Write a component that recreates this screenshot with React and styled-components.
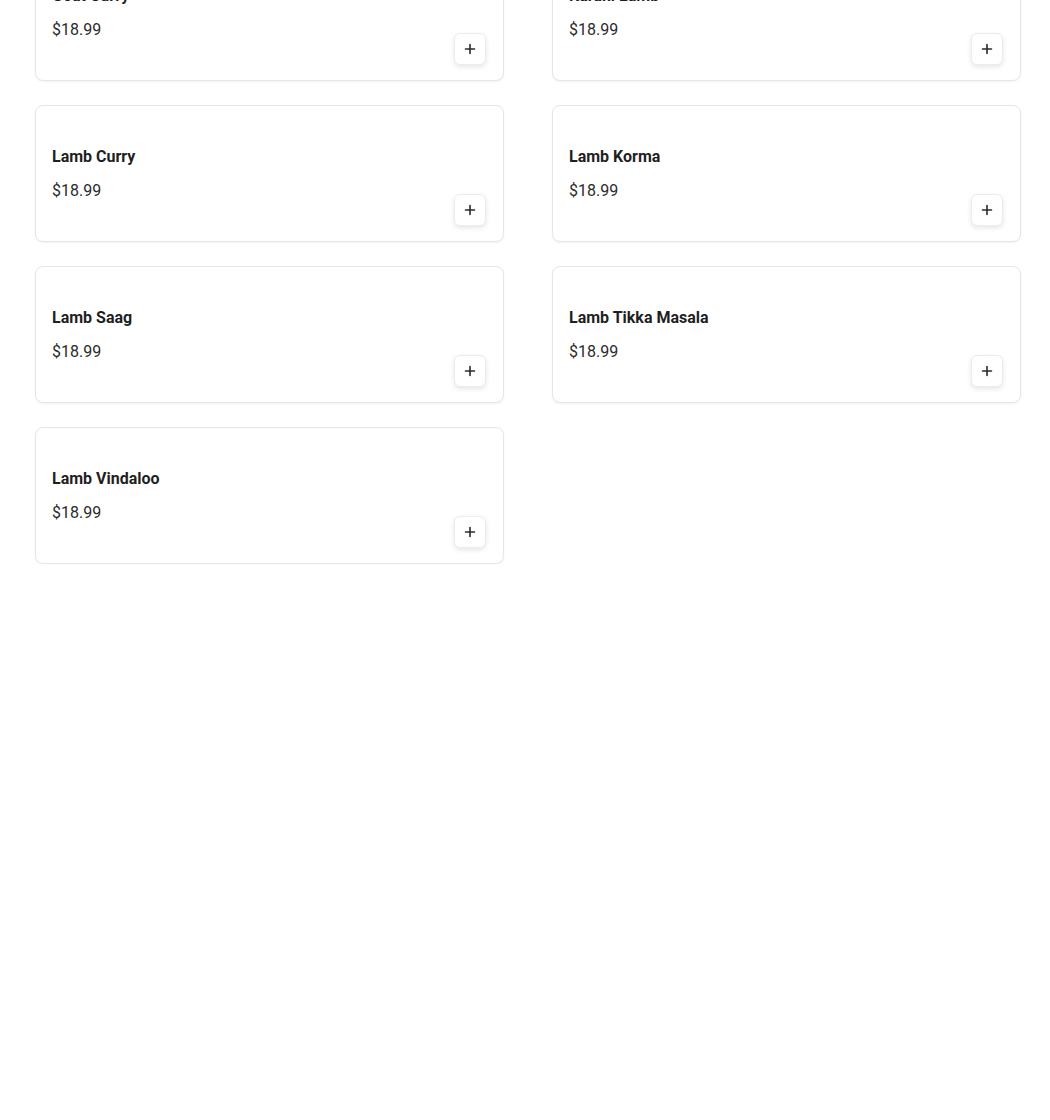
import React from 'react';
import styled, { createGlobalStyle } from 'styled-components';

const GlobalStyle = createGlobalStyle`
  body {
    margin: 0;
    background: #ffffff;
    font-family: Roboto, "Liberation Sans", sans-serif;
  }
`;

const Page = styled.div`
  padding: 0 29px 0 35px;
  margin-top: -56px;
`;

const Grid = styled.div`
  display: grid;
  grid-template-columns: 1fr 1fr;
  column-gap: 48px;
  row-gap: 24px;
`;

const Card = styled.div`
  display: flex;
  align-items: flex-end;
  justify-content: space-between;
  box-sizing: border-box;
  height: 137px;
  padding: 16px 17px 15px 16px;
  background: #fff;
  border: 1px solid #e6e6e6;
  border-radius: 8px;
  box-shadow: 0 1px 2px rgba(0, 0, 0, 0.05);
`;

const Info = styled.div`
  display: flex;
  flex-direction: column;
  align-self: flex-start;
  padding-top: 23px;
`;

const Name = styled.div`
  font-size: 16px;
  line-height: 24px;
  font-weight: 700;
  color: #1f1f1f;
`;

const Price = styled.div`
  margin-top: 10px;
  font-size: 16px;
  line-height: 24px;
  color: #2b2b2b;
`;

const AddButton = styled.button`
  display: flex;
  align-items: center;
  justify-content: center;
  width: 32px;
  height: 32px;
  padding: 0;
  background: #fff;
  border: 1px solid #ececec;
  border-radius: 6px;
  box-shadow: 0 2px 5px rgba(0, 0, 0, 0.1);
  cursor: pointer;
  color: #2a2a2a;
`;

const PlusIcon = () => (
  <svg width="12" height="12" viewBox="0 0 12 12" fill="none">
    <path d="M6 1.5v9M1.5 6h9" stroke="currentColor" strokeWidth="1.6" strokeLinecap="round" />
  </svg>
);

const items = [
  'Goat Curry',
  'Karahi Lamb',
  'Lamb Curry',
  'Lamb Korma',
  'Lamb Saag',
  'Lamb Tikka Masala',
  'Lamb Vindaloo',
];

const App = () => (
  <>
    <GlobalStyle />
    <Page>
      <Grid>
        {items.map((name) => (
          <Card key={name}>
            <Info>
              <Name>{name}</Name>
              <Price>$18.99</Price>
            </Info>
            <AddButton aria-label={`Add ${name}`}>
              <PlusIcon />
            </AddButton>
          </Card>
        ))}
      </Grid>
    </Page>
  </>
);

export default App;
